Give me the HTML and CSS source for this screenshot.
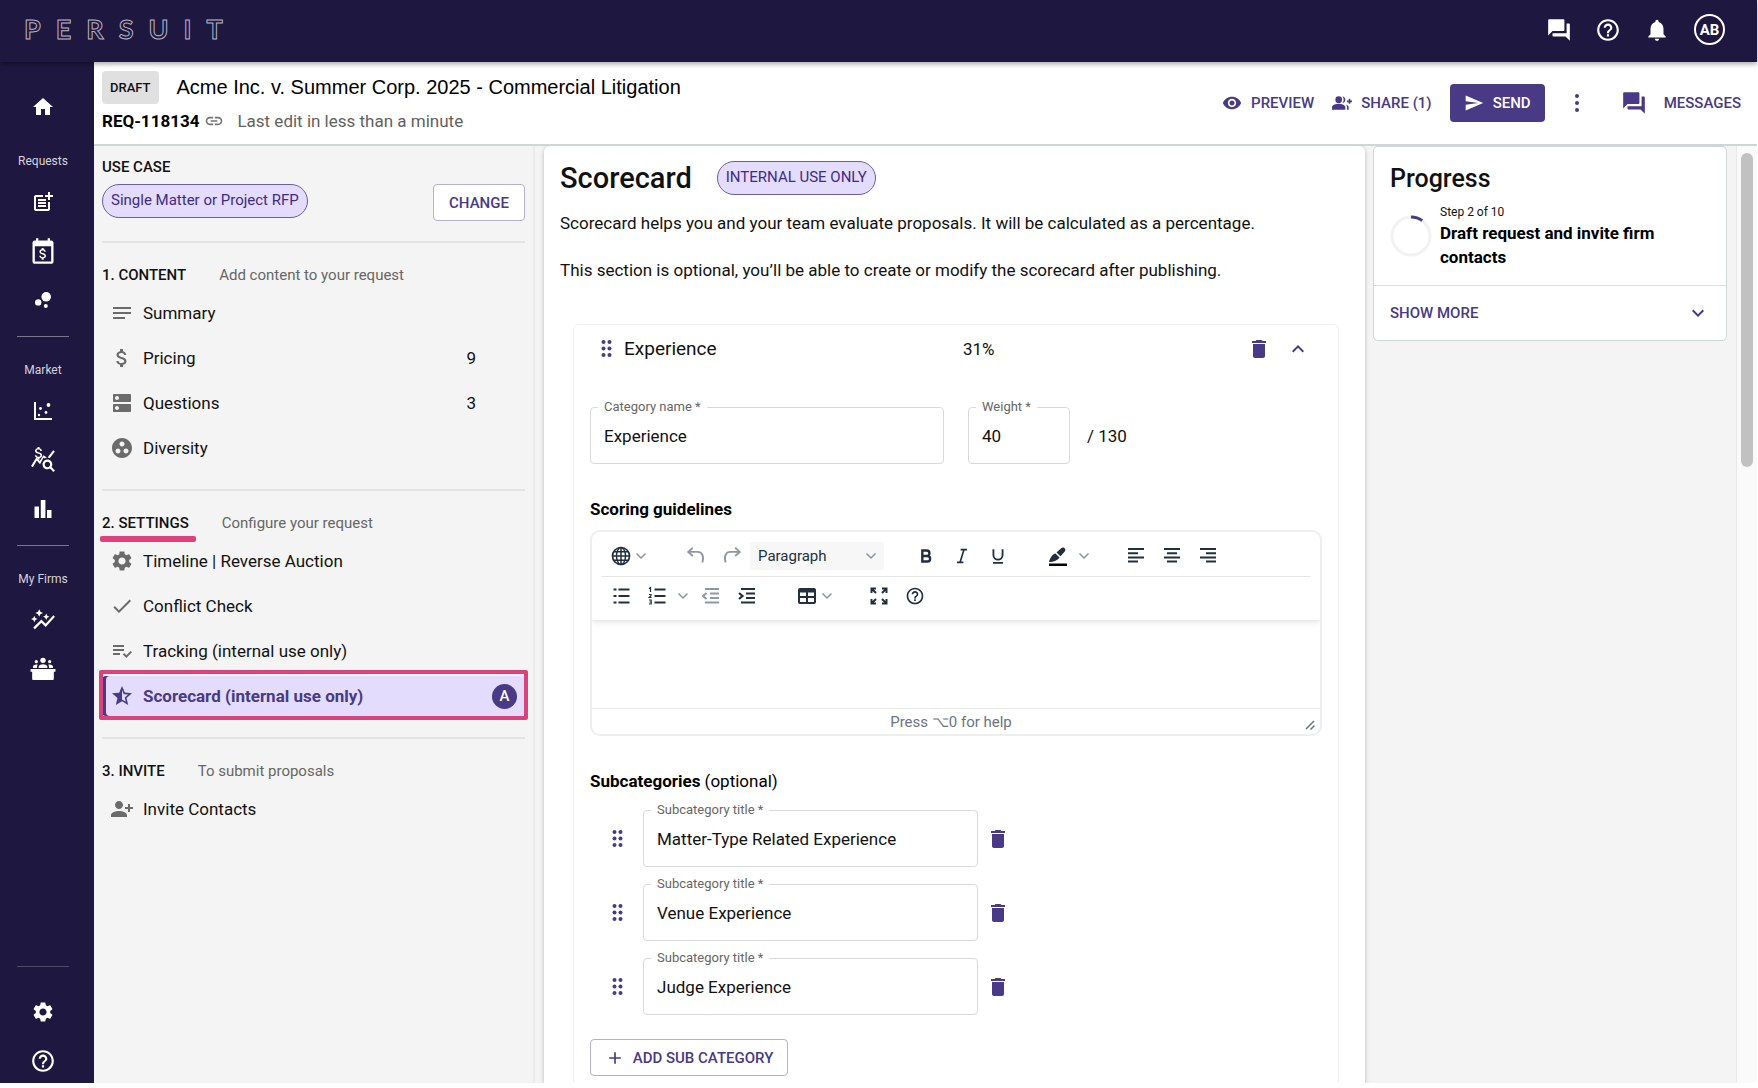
FILE: index.html
```html
<!DOCTYPE html>
<html lang="en">
<head>
<meta charset="utf-8">
<title>Persuit – Scorecard</title>
<link rel="stylesheet" href="styles.css">
</head>
<body>
<svg class="sprite" aria-hidden="true">
  <symbol id="home" viewBox="0 0 24 24"><path d="M10 20v-6h4v6h5v-8h3L12 3 2 12h3v8z"/></symbol>
  <symbol id="post-add" viewBox="0 0 24 24"><path d="M17 19H5V7h7V5H5c-1.1 0-2 .9-2 2v12c0 1.1.9 2 2 2h12c1.1 0 2-.9 2-2v-7h-2zM19 2h-2v3h-3v2h3v3h2V7h3V5h-3zM7 9h8v2H7zM7 12h8v2H7zM7 15h8v2H7z"/></symbol>
  <symbol id="price-calendar" viewBox="0 0 24 24"><path d="M19 3h-1V1h-2v2H8V1H6v2H5c-1.1 0-2 .9-2 2v16c0 1.1.9 2 2 2h14c1.100 0 2-.9 2-2V5c0-1.100-.9-2-2-2zm0 18H5V8h14z"/><path transform="translate(5.300 7.700) scale(.56)" d="M11.800 10.900c-2.270-.59-3-1.200-3-2.150 0-1.090 1.010-1.850 2.700-1.850 1.780 0 2.440.85 2.500 2.100h2.210c-.07-1.720-1.120-3.300-3.210-3.810V3h-3v2.160c-1.940.42-3.500 1.680-3.500 3.610 0 2.310 1.910 3.460 4.700 4.130 2.500.6 3 1.480 3 2.410 0 .69-.49 1.790-2.700 1.790-2.060 0-2.870-.92-2.980-2.100h-2.200c.12 2.190 1.760 3.420 3.680 3.830V21h3v-2.150c1.950-.37 3.500-1.500 3.500-3.550 0-2.840-2.430-3.810-4.700-4.400z"/></symbol>
  <symbol id="bubbles" viewBox="0 0 24 24"><circle cx="7.200" cy="14.400" r="3.200"/><circle cx="14.800" cy="18" r="2"/><circle cx="15.200" cy="8.800" r="4.800"/></symbol>
  <symbol id="scatter" viewBox="0 0 24 24"><path d="M3 3h2v16h16v2H3z"/><circle cx="17.500" cy="6" r="1.900"/><circle cx="9.500" cy="9.500" r="1.400"/><circle cx="15" cy="13.500" r="1.400"/><circle cx="8" cy="16" r="1.200"/></symbol>
  <symbol id="price-stats" viewBox="0 0 24 24"><path d="M19.880 18.470c.44-.7.7-1.510.7-2.390 0-2.490-2.010-4.500-4.500-4.500s-4.500 2.010-4.500 4.500 2.010 4.500 4.490 4.500c.88 0 1.700-.26 2.390-.7L21.580 23 23 21.580zm-3.800.11c-1.380 0-2.500-1.120-2.500-2.500s1.120-2.500 2.500-2.500 2.500 1.120 2.500 2.500-1.120 2.500-2.500 2.500zM15.500 9.800l-2 .8-1-1-3.240 6.280-3.010-3.520-3.630 6.310L1 17.500l5-8 3 3.500 3.400-5.500zM18.310 10.080c-.64-.28-1.330-.45-2.050-.49L21.380 3 23 4.180z"/><path transform="translate(.3 -2.300) scale(.66)" d="M11.800 10.900c-2.270-.59-3-1.200-3-2.150 0-1.090 1.010-1.850 2.700-1.850 1.780 0 2.440.85 2.500 2.100h2.210c-.07-1.720-1.120-3.300-3.210-3.810V3h-3v2.160c-1.940.42-3.500 1.680-3.500 3.610 0 2.310 1.910 3.460 4.700 4.130 2.500.6 3 1.480 3 2.410 0 .69-.49 1.790-2.700 1.790-2.060 0-2.870-.92-2.980-2.100h-2.200c.12 2.190 1.760 3.420 3.680 3.830V21h3v-2.150c1.950-.37 3.500-1.500 3.500-3.550 0-2.840-2.430-3.810-4.700-4.400z"/></symbol>
  <symbol id="bars" viewBox="0 0 24 24"><path d="M3.500 9.500h4.500V21H3.500zM9.800 3h4.600v18H9.800zM16 13h4.500v8H16z"/></symbol>
  <symbol id="trend" viewBox="0 0 24 24"><path d="M14.060 9.940 12 9l2.060-.94L15 6l.94 2.060L18 9l-2.060.94L15 12zM4 14l.94-2.060L7 11l-2.060-.94L4 8l-.94 2.060L1 11l2.060.94zm4.500-5 1.090-2.410L12 5.500 9.590 4.410 8.500 2 7.410 4.410 5 5.500l2.410 1.090zm-4 11.500 6-6.010 4 4L23 8.930l-1.410-1.410-7.090 7.970-4-4L3 19z"/></symbol>
  <symbol id="panel" viewBox="0 0 24 24"><circle cx="12" cy="4" r="2.500"/><circle cx="5.800" cy="5.300" r="1.500"/><circle cx="18.200" cy="5.300" r="1.500"/><path d="M8 11V9.800C8 8.300 10 7.500 12 7.500s4 .8 4 2.300V11zM2.800 11V9.800c0-1.300 1.700-2 3-2 .5 0 .9.100 1.300.2-.4.500-.6 1.100-.6 1.800V11zM17.500 11V9.800c0-.7-.2-1.300-.6-1.800.4-.1.800-.2 1.300-.2 1.300 0 3 .7 3 2V11zM.5 12h23v2.500H22V21c0 .8-.4 1.200-1.200 1.200H3.200C2.400 22.200 2 21.800 2 21v-6.500H.5z"/></symbol>
  <symbol id="gear" viewBox="0 0 24 24"><path d="M19.140 12.940c.04-.3.06-.61.06-.94 0-.32-.02-.64-.07-.94l2.030-1.580c.18-.14.23-.41.12-.61l-1.920-3.320c-.12-.22-.37-.29-.59-.22l-2.390.96c-.5-.38-1.030-.7-1.620-.94l-.36-2.540c-.04-.24-.24-.41-.48-.41h-3.840c-.24 0-.43.17-.47.41l-.36 2.540c-.59.24-1.130.57-1.620.94l-2.390-.96c-.22-.08-.47 0-.59.22L2.740 8.870c-.12.21-.08.47.12.61l2.030 1.580c-.05.3-.09.63-.09.94s.02.64.07.94l-2.030 1.580c-.18.14-.23.41-.12.61l1.920 3.320c.12.22.37.29.59.22l2.390-.96c.5.38 1.030.7 1.620.94l.36 2.540c.05.24.24.41.48.41h3.840c.24 0 .44-.17.47-.41l.36-2.540c.59-.24 1.130-.56 1.620-.94l2.390.96c.22.08.47 0 .59-.22l1.920-3.320c.12-.22.07-.47-.12-.61zM12 15.600c-1.980 0-3.600-1.620-3.600-3.600s1.620-3.600 3.600-3.600 3.600 1.620 3.600 3.600-1.620 3.600-3.600 3.600z"/></symbol>
  <symbol id="help" viewBox="0 0 24 24"><path d="M11 18h2v-2h-2zm1-16C6.480 2 2 6.480 2 12s4.480 10 10 10 10-4.480 10-10S17.520 2 12 2zm0 18c-4.410 0-8-3.590-8-8s3.590-8 8-8 8 3.590 8 8-3.590 8-8 8zm0-14c-2.210 0-4 1.790-4 4h2c0-1.100.9-2 2-2s2 .9 2 2c0 2-3 1.750-3 5h2c0-2.250 3-2.500 3-5 0-2.210-1.790-4-4-4z"/></symbol>
  <symbol id="bell" viewBox="0 0 24 24"><path d="M12 22c1.100 0 2-.9 2-2h-4c0 1.100.89 2 2 2zm6-6v-5c0-3.070-1.640-5.640-4.500-6.320V4c0-.83-.67-1.500-1.500-1.500s-1.500.67-1.500 1.500v.68C7.630 5.360 6 7.920 6 11v5l-2 2v1h16v-1z"/></symbol>
  <symbol id="forum" viewBox="0 0 24 24"><path d="M21 6h-2v9H6v2c0 .55.45 1 1 1h11l4 4V7c0-.55-.45-1-1-1zm-4 6V3c0-.55-.45-1-1-1H3c-.55 0-1 .45-1 1v14l4-4h10c.55 0 1-.45 1-1z"/></symbol>
  <symbol id="eye" viewBox="0 0 24 24"><path d="M12 4.500C7 4.500 2.730 7.610 1 12c1.730 4.390 6 7.500 11 7.500s9.270-3.110 11-7.500c-1.730-4.390-6-7.500-11-7.500zM12 17c-2.760 0-5-2.240-5-5s2.240-5 5-5 5 2.240 5 5-2.240 5-5 5zm0-8c-1.660 0-3 1.340-3 3s1.340 3 3 3 3-1.340 3-3-1.340-3-3-3z"/></symbol>
  <symbol id="group-add" viewBox="0 0 24 24"><path d="M22 9V7h-2v2h-2v2h2v2h2v-2h2V9z"/><circle cx="8" cy="8" r="4"/><path d="M8 13c-2.670 0-8 1.340-8 4v3h16v-3c0-2.660-5.330-4-8-4zM12.510 4.050C13.430 5.110 14 6.490 14 8s-.57 2.890-1.490 3.950C14.470 11.700 16 10.040 16 8s-1.530-3.700-3.490-3.950zM16.530 13.830C17.420 14.660 18 15.700 18 17v3h2v-3c0-1.450-1.590-2.510-3.470-3.170z"/></symbol>
  <symbol id="send" viewBox="0 0 24 24"><path d="M2.010 21 23 12 2.010 3 2 10l15 2-15 2z"/></symbol>
  <symbol id="dots" viewBox="0 0 24 24"><circle cx="12" cy="5" r="2"/><circle cx="12" cy="12" r="2"/><circle cx="12" cy="19" r="2"/></symbol>
  <symbol id="link" viewBox="0 0 24 24"><path d="M3.900 12c0-1.710 1.390-3.100 3.100-3.100h4V7H7c-2.760 0-5 2.240-5 5s2.240 5 5 5h4v-1.900H7c-1.710 0-3.100-1.390-3.100-3.100zM8 13h8v-2H8zm9-6h-4v1.900h4c1.710 0 3.100 1.390 3.100 3.100s-1.390 3.100-3.100 3.100h-4V17h4c2.760 0 5-2.240 5-5s-2.240-5-5-5z"/></symbol>
  <symbol id="notes" viewBox="0 0 24 24"><path d="M3 18h12v-2H3zM3 6v2h18V6zm0 7h18v-2H3z"/></symbol>
  <symbol id="money" viewBox="0 0 24 24"><path d="M11.800 10.900c-2.270-.59-3-1.200-3-2.150 0-1.090 1.010-1.850 2.700-1.850 1.780 0 2.440.85 2.500 2.100h2.210c-.07-1.720-1.120-3.300-3.210-3.810V3h-3v2.160c-1.940.42-3.500 1.680-3.500 3.610 0 2.310 1.910 3.460 4.700 4.130 2.500.6 3 1.480 3 2.410 0 .69-.49 1.790-2.700 1.790-2.060 0-2.870-.92-2.980-2.100h-2.200c.12 2.190 1.760 3.420 3.680 3.830V21h3v-2.150c1.950-.37 3.500-1.500 3.500-3.550 0-2.840-2.430-3.810-4.700-4.400z"/></symbol>
  <symbol id="dns" viewBox="0 0 24 24"><path d="M20 13H4c-.55 0-1 .45-1 1v6c0 .55.45 1 1 1h16c.55 0 1-.45 1-1v-6c0-.55-.45-1-1-1zM7 19c-1.100 0-2-.9-2-2s.9-2 2-2 2 .9 2 2-.9 2-2 2zM20 3H4c-.55 0-1 .45-1 1v6c0 .55.45 1 1 1h16c.55 0 1-.45 1-1V4c0-.55-.45-1-1-1zM7 9c-1.100 0-2-.9-2-2s.9-2 2-2 2 .9 2 2-.9 2-2 2z"/></symbol>
  <symbol id="group-work" viewBox="0 0 24 24"><path d="M12 2C6.480 2 2 6.480 2 12s4.480 10 10 10 10-4.480 10-10S17.520 2 12 2zM8 17.500c-1.380 0-2.500-1.120-2.500-2.500s1.120-2.500 2.500-2.500 2.500 1.120 2.500 2.500-1.120 2.500-2.500 2.500zM9.500 8c0-1.380 1.120-2.500 2.500-2.500s2.500 1.120 2.500 2.500-1.120 2.500-2.500 2.500S9.500 9.380 9.500 8zm6.500 9.500c-1.380 0-2.500-1.120-2.500-2.500s1.120-2.500 2.500-2.500 2.500 1.120 2.500 2.500-1.120 2.500-2.500 2.500z"/></symbol>
  <symbol id="check" viewBox="0 0 24 24"><path d="M9 16.170 4.830 12l-1.420 1.410L9 19 21 7l-1.410-1.410z"/></symbol>
  <symbol id="list-check" viewBox="0 0 24 24"><path d="M3 10h11v2H3zM3 6h11v2H3zM3 14h7v2H3zM20.590 11.930l-4.250 4.240-2.120-2.120-1.410 1.410L16.340 19 22 13.340z"/></symbol>
  <symbol id="star-half" viewBox="0 0 24 24"><path d="m22 9.240-7.190-.62L12 2 9.190 8.630 2 9.240l5.460 4.730L5.820 21 12 17.270 18.180 21l-1.630-7.030zM12 15.400V6.100l1.710 4.040 4.380.38-3.320 2.880 1 4.280z"/></symbol>
  <symbol id="person-add" viewBox="0 0 24 24"><path d="M13 8c0-2.210-1.790-4-4-4S5 5.790 5 8s1.790 4 4 4 4-1.790 4-4zm2 2v2h3v3h2v-3h3v-2h-3V7h-2v3zM1 18v2h16v-2c0-2.660-5.330-4-8-4s-8 1.340-8 4z"/></symbol>
  <symbol id="trash" viewBox="0 0 24 24"><path d="M6 19c0 1.100.9 2 2 2h8c1.100 0 2-.9 2-2V7H6zM19 4h-3.500l-1-1h-5l-1 1H5v2h14z"/></symbol>
  <symbol id="down" viewBox="0 0 24 24"><path d="M16.590 8.590 12 13.170 7.410 8.590 6 10l6 6 6-6z"/></symbol>
  <symbol id="up" viewBox="0 0 24 24"><path d="m12 8-6 6 1.410 1.410L12 10.830l4.590 4.580L18 14z"/></symbol>
  <symbol id="plus" viewBox="0 0 24 24"><path d="M19 13h-6v6h-2v-6H5v-2h6V5h2v6h6z"/></symbol>
  <symbol id="drag" viewBox="0 0 12 20"><circle cx="2.500" cy="3" r="2"/><circle cx="8.500" cy="3" r="2"/><circle cx="2.500" cy="9.500" r="2"/><circle cx="8.500" cy="9.500" r="2"/><circle cx="2.500" cy="16" r="2"/><circle cx="8.500" cy="16" r="2"/></symbol>
  <symbol id="caret" viewBox="0 0 12 12"><path d="m1.500 3.500 4.500 4.500 4.500-4.500" fill="none" stroke="currentColor" stroke-width="1.500"/></symbol>
  <symbol id="globe" viewBox="0 0 24 24"><circle cx="12" cy="12" r="8.500" fill="none" stroke="currentColor" stroke-width="1.700"/><ellipse cx="12" cy="12" rx="4.500" ry="8.500" fill="none" stroke="currentColor" stroke-width="1.500"/><path d="M12 3.500v17M3.500 12h17M4.500 7.800h15M4.500 16.200h15" fill="none" stroke="currentColor" stroke-width="1.500"/></symbol>
  <symbol id="undo" viewBox="0 0 24 24"><path d="M8.500 3 3.500 7.500l5 4.500M3.500 7.500H14c4.500 0 7 4.500 5 11.500" fill="none" stroke="currentColor" stroke-width="2"/></symbol>
  <symbol id="redo" viewBox="0 0 24 24"><path d="m15.500 3 5 4.500-5 4.500M20.500 7.500H10c-4.500 0-7 4.500-5 11.500" fill="none" stroke="currentColor" stroke-width="2"/></symbol>
  <symbol id="bold" viewBox="0 0 24 24"><path d="M8 6h4.800a3 3 0 0 1 0 6H8zM8 12h5.500a3 3 0 0 1 0 6H8z" fill="none" stroke="currentColor" stroke-width="2.600"/></symbol>
  <symbol id="italic" viewBox="0 0 24 24"><path d="M10.500 5h7M6.500 19h7M14.200 5l-4.400 14" fill="none" stroke="currentColor" stroke-width="1.800"/></symbol>
  <symbol id="underline" viewBox="0 0 24 24"><path d="M7 4.500v6.500a5 5 0 0 0 10 0V4.500M6.500 19.500h11" fill="none" stroke="currentColor" stroke-width="2"/></symbol>
  <symbol id="pen" viewBox="0 0 24 24"><path d="M3 18c1-4 3.500-8 6.500-8.500l4 4C12 16 8 18 3 18zM10.500 8.500l5-4.500c2-1.700 5 1 3.500 3.200l-4.500 5z"/><path d="M3 19.500h18V22H3z" fill="#000"/></symbol>
  <symbol id="left" viewBox="0 0 24 24"><path d="M4 5h16M4 9.200h10M4 13.400h16M4 17.600h10" fill="none" stroke="currentColor" stroke-width="2"/></symbol>
  <symbol id="center" viewBox="0 0 24 24"><path d="M4 5h16M7 9.200h10M4 13.400h16M7 17.600h10" fill="none" stroke="currentColor" stroke-width="2"/></symbol>
  <symbol id="right" viewBox="0 0 24 24"><path d="M4 5h16M10 9.200h10M4 13.400h16M10 17.600h10" fill="none" stroke="currentColor" stroke-width="2"/></symbol>
  <symbol id="bullets" viewBox="0 0 24 24"><path d="M9.500 5.500h11M9.500 12h11M9.500 18.500h11M4.500 5.500h3M4.500 12h3M4.500 18.500h3" fill="none" stroke="currentColor" stroke-width="2.200"/></symbol>
  <symbol id="numbers" viewBox="0 0 24 24"><path d="M9.500 5.500h11M9.500 12h11M9.500 18.500h11" fill="none" stroke="currentColor" stroke-width="2.200"/><path d="M4 4.500 5.500 3.500v4.500M4 10.500h2v1.200L4.200 13.500H6.500M4 16h2.200v4H4M4.500 18H6" fill="none" stroke="currentColor" stroke-width="1.200"/></symbol>
  <symbol id="outdent" viewBox="0 0 24 24"><path d="M6 5h14M11 9.500h9M11 14h9M6 18.500h14M7.500 9 4 12l3.500 3" fill="none" stroke="currentColor" stroke-width="2"/></symbol>
  <symbol id="indent" viewBox="0 0 24 24"><path d="M6 5h14M11 9.500h9M11 14h9M6 18.500h14M4 9l3.500 3L4 15" fill="none" stroke="currentColor" stroke-width="2.200"/></symbol>
  <symbol id="table" viewBox="0 0 24 24"><path fill-rule="evenodd" d="M5 4h14c1.100 0 2 .9 2 2v12c0 1.100-.9 2-2 2H5c-1.100 0-2-.9-2-2V6c0-1.100.9-2 2-2zm0 4.500v3.500h6V8.500zm8 0v3.500h6V8.500zM5 14v4h6v-4zm8 0v4h6v-4z"/></symbol>
  <symbol id="fullscreen" viewBox="0 0 24 24"><path d="M4.500 9V4.500H9M4.500 4.500 9 9M15 4.500h4.500V9M19.500 4.500 15 9M4.500 15v4.500H9M4.500 19.500 9 15M15 19.500h4.500V15M19.500 19.500 15 15" fill="none" stroke="currentColor" stroke-width="2"/></symbol>
  <symbol id="resize" viewBox="0 0 10 10"><path d="M1 9 9 1M5.500 9.500l4-4" fill="none" stroke="currentColor" stroke-width="1.500"/></symbol>
</svg>

<header class="topbar">
  <a class="logo" href="#" aria-label="Persuit"><span>P</span><span>E</span><span>R</span><span>S</span><span>U</span><span>I</span><span>T</span></a>
  <div class="topbar-tools">
    <button class="bar-btn" aria-label="Chat"><svg class="i26"><use href="#forum"/></svg></button>
    <button class="bar-btn" aria-label="Help"><svg class="i26"><use href="#help"/></svg></button>
    <button class="bar-btn" aria-label="Notifications"><svg class="i26"><use href="#bell"/></svg></button>
    <button class="avatar">AB</button>
  </div>
</header>

<div class="shell">
  <nav class="rail" aria-label="Main">
    <a href="#" class="rail-home" aria-label="Home"><svg class="i24"><use href="#home"/></svg></a>
    <div class="rail-group">
      <span class="rail-label">Requests</span>
      <a href="#" aria-label="New request"><svg class="i24"><use href="#post-add"/></svg></a>
      <a href="#" aria-label="Rates"><svg class="i28"><use href="#price-calendar"/></svg></a>
      <a href="#" aria-label="Bubbles"><svg class="i24"><use href="#bubbles"/></svg></a>
    </div>
    <div class="rail-group">
      <span class="rail-label">Market</span>
      <a href="#" aria-label="Scatter"><svg class="i24"><use href="#scatter"/></svg></a>
      <a href="#" aria-label="Price insights"><svg class="i26"><use href="#price-stats"/></svg></a>
      <a href="#" aria-label="Charts"><svg class="i24"><use href="#bars"/></svg></a>
    </div>
    <div class="rail-group">
      <span class="rail-label">My Firms</span>
      <a href="#" aria-label="Trends"><svg class="i26"><use href="#trend"/></svg></a>
      <a href="#" aria-label="Panel"><svg class="i26"><use href="#panel"/></svg></a>
    </div>
    <div class="rail-foot">
      <a href="#" aria-label="Settings"><svg class="i24"><use href="#gear"/></svg></a>
      <a href="#" aria-label="Support"><svg class="i26"><use href="#help"/></svg></a>
    </div>
  </nav>

  <div class="page">
    <div class="request-bar">
      <div class="request-info">
        <div class="request-title"><span class="badge">DRAFT</span><h1>Acme Inc. v. Summer Corp. 2025 - Commercial Litigation</h1></div>
        <div class="request-meta"><strong>REQ-118134</strong><svg class="i20"><use href="#link"/></svg><span>Last edit in less than a minute</span></div>
      </div>
      <div class="request-actions">
        <button class="text-btn"><svg class="i20"><use href="#eye"/></svg>PREVIEW</button>
        <button class="text-btn"><svg class="i20"><use href="#group-add"/></svg>SHARE (1)</button>
        <button class="send-btn"><svg class="i20"><use href="#send"/></svg>SEND</button>
        <button class="text-btn more-btn" aria-label="More"><svg class="i24"><use href="#dots"/></svg></button>
        <button class="text-btn messages-btn"><svg class="i26"><use href="#forum"/></svg>MESSAGES</button>
      </div>
    </div>

    <div class="workspace">
      <aside class="steps">
        <h2 class="steps-title">USE CASE</h2>
        <div class="use-case"><span class="chip">Single Matter or Project RFP</span><button class="outline-btn change-btn">CHANGE</button></div>
        <section class="step">
          <div class="step-head"><h2>1. CONTENT</h2><span>Add content to your request</span></div>
          <ul>
            <li><a href="#"><svg class="i24"><use href="#notes"/></svg>Summary</a></li>
            <li><a href="#"><svg class="i24"><use href="#money"/></svg>Pricing<b class="count">9</b></a></li>
            <li><a href="#"><svg class="i24"><use href="#dns"/></svg>Questions<b class="count">3</b></a></li>
            <li><a href="#"><svg class="i24"><use href="#group-work"/></svg>Diversity</a></li>
          </ul>
        </section>
        <section class="step">
          <div class="step-head"><h2 class="marked">2. SETTINGS</h2><span>Configure your request</span></div>
          <ul>
            <li><a href="#"><svg class="i24"><use href="#gear"/></svg>Timeline | Reverse Auction</a></li>
            <li><a href="#"><svg class="i24"><use href="#check"/></svg>Conflict Check</a></li>
            <li><a href="#"><svg class="i24"><use href="#list-check"/></svg>Tracking (internal use only)</a></li>
            <li><a href="#" class="active" aria-current="page"><svg class="i24"><use href="#star-half"/></svg>Scorecard (internal use only)<span class="person">A</span></a></li>
          </ul>
        </section>
        <section class="step">
          <div class="step-head"><h2>3. INVITE</h2><span>To submit proposals</span></div>
          <ul>
            <li><a href="#"><svg class="i24"><use href="#person-add"/></svg>Invite Contacts</a></li>
          </ul>
        </section>
      </aside>

      <main class="sheet">
        <div class="sheet-head"><h2>Scorecard</h2><span class="chip">INTERNAL USE ONLY</span></div>
        <p>Scorecard helps you and your team evaluate proposals. It will be calculated as a percentage.</p>
        <p>This section is optional, you’ll be able to create or modify the scorecard after publishing.</p>

        <section class="category">
          <div class="category-head">
            <svg class="drag"><use href="#drag"/></svg>
            <h3>Experience</h3>
            <span class="share">31%</span>
            <button class="icon-btn" aria-label="Delete category"><svg class="i24"><use href="#trash"/></svg></button>
            <button class="icon-btn" aria-label="Collapse"><svg class="i24"><use href="#up"/></svg></button>
          </div>
          <div class="category-fields">
            <div class="field name-field"><label for="cat">Category name *</label><input id="cat" type="text" value="Experience"></div>
            <div class="field weight-field"><label for="weight">Weight *</label><input id="weight" type="text" value="40"></div>
            <span>/ 130</span>
          </div>
          <h4>Scoring guidelines</h4>
          <div class="editor">
            <div class="toolbar">
              <div class="tool-row">
                <button class="tool" aria-label="Language"><svg class="i24"><use href="#globe"/></svg></button><button class="tool caret" aria-label="Language options"><svg><use href="#caret"/></svg></button>
                <button class="tool dim gap-lg" aria-label="Undo"><svg class="i22"><use href="#undo"/></svg></button>
                <button class="tool dim" aria-label="Redo"><svg class="i22"><use href="#redo"/></svg></button>
                <button class="tool-select">Paragraph<svg><use href="#caret"/></svg></button>
                <button class="tool gap-md" aria-label="Bold"><svg class="i22"><use href="#bold"/></svg></button>
                <button class="tool" aria-label="Italic"><svg class="i22"><use href="#italic"/></svg></button>
                <button class="tool" aria-label="Underline"><svg class="i22"><use href="#underline"/></svg></button>
                <button class="tool gap-md" aria-label="Text color"><svg class="i24"><use href="#pen"/></svg></button><button class="tool caret split" aria-label="Color options"><svg><use href="#caret"/></svg></button>
                <button class="tool gap-md" aria-label="Align left"><svg class="i24"><use href="#left"/></svg></button>
                <button class="tool" aria-label="Align center"><svg class="i24"><use href="#center"/></svg></button>
                <button class="tool" aria-label="Align right"><svg class="i24"><use href="#right"/></svg></button>
              </div>
              <div class="tool-row">
                <button class="tool" aria-label="Bullet list"><svg class="i24"><use href="#bullets"/></svg></button>
                <button class="tool" aria-label="Numbered list"><svg class="i24"><use href="#numbers"/></svg></button><button class="tool caret split" aria-label="List options"><svg><use href="#caret"/></svg></button>
                <button class="tool dim" aria-label="Outdent"><svg class="i24"><use href="#outdent"/></svg></button>
                <button class="tool" aria-label="Indent"><svg class="i24"><use href="#indent"/></svg></button>
                <button class="tool gap-md" aria-label="Table"><svg class="i24"><use href="#table"/></svg></button><button class="tool caret" aria-label="Table options"><svg><use href="#caret"/></svg></button>
                <button class="tool gap-md" aria-label="Fullscreen"><svg class="i24"><use href="#fullscreen"/></svg></button>
                <button class="tool" aria-label="Help"><svg class="i20"><use href="#help"/></svg></button>
              </div>
            </div>
            <textarea aria-label="Scoring guidelines"></textarea>
            <div class="status"><span>Press ⌥0 for help</span><svg><use href="#resize"/></svg></div>
          </div>
          <h4>Subcategories <span>(optional)</span></h4>
          <div class="subs">
            <div class="sub"><svg class="drag"><use href="#drag"/></svg><div class="field"><label for="s1">Subcategory title *</label><input id="s1" type="text" value="Matter-Type Related Experience"></div><button class="icon-btn" aria-label="Delete"><svg class="i24"><use href="#trash"/></svg></button></div>
            <div class="sub"><svg class="drag"><use href="#drag"/></svg><div class="field"><label for="s2">Subcategory title *</label><input id="s2" type="text" value="Venue Experience"></div><button class="icon-btn" aria-label="Delete"><svg class="i24"><use href="#trash"/></svg></button></div>
            <div class="sub"><svg class="drag"><use href="#drag"/></svg><div class="field"><label for="s3">Subcategory title *</label><input id="s3" type="text" value="Judge Experience"></div><button class="icon-btn" aria-label="Delete"><svg class="i24"><use href="#trash"/></svg></button></div>
          </div>
          <button class="outline-btn add-btn"><svg class="i20"><use href="#plus"/></svg>ADD SUB CATEGORY</button>
        </section>
      </main>

      <aside class="progress">
        <div class="progress-card">
          <div class="progress-body">
            <h2>Progress</h2>
            <div class="progress-step">
              <svg class="ring" viewBox="0 0 42 42"><circle cx="21" cy="21" r="19" fill="none" stroke="#f2f2f2" stroke-width="3"/><path d="M21 2a19 19 0 0 1 11.200 3.600" fill="none" stroke="#483a85" stroke-width="3"/></svg>
              <div><small>Step 2 of 10</small><strong>Draft request and invite firm contacts</strong></div>
            </div>
          </div>
          <button class="show-more">SHOW MORE<svg class="i24"><use href="#down"/></svg></button>
        </div>
      </aside>
      <div class="scroll-track"><div class="scroll-thumb"></div></div>
    </div>
  </div>
</div>
</body>
</html>
```
FILE: styles.css
```css
* { box-sizing: border-box; }
body {
  margin: 0;
  padding: 0 1px 5px 0;
  height: 100vh;
  display: flex;
  flex-direction: column;
  overflow: hidden;
  background: #fff;
  color: #111;
  font: 400 17px/24px Roboto, sans-serif;
}
h1, h2, h3, h4, p, ul { margin: 0; padding: 0; font-weight: 500; }
p, ul { font-weight: 400; }
ul { list-style: none; }
a { color: inherit; text-decoration: none; }
button { font: inherit; color: inherit; background: none; border: 0; padding: 0; margin: 0; display: flex; align-items: center; justify-content: center; flex: none; cursor: pointer; }
svg { fill: currentColor; display: block; flex: none; }
.sprite { position: absolute; width: 0; height: 0; }
.i20 { width: 20px; height: 20px; }
.i22 { width: 22px; height: 22px; }
.i24 { width: 24px; height: 24px; }
.i26 { width: 26px; height: 26px; }
.i28 { width: 28px; height: 28px; }

/* top bar */
.topbar {
  flex: none;
  height: 62px;
  padding: 0 32px 3px 24px;
  display: flex;
  align-items: center;
  justify-content: space-between;
  background: #1e173f;
  color: #fff;
  position: relative;
  z-index: 2;
  box-shadow: 0 2px 5px rgba(0, 0, 0, .35);
}
.logo {
  display: flex;
  gap: 15px;
  padding-bottom: 2px;
  font-family: Lato, sans-serif;
  font-size: 27px;
  line-height: 32px;
  font-weight: 700;
  color: #1e173f;
  -webkit-text-stroke: 1px #b8b4c6;
}
.topbar-tools { display: flex; align-items: center; gap: 23px; }
.avatar { width: 31px; height: 31px; margin-left: 1px; border: 2px solid #fff; border-radius: 50%; font-size: 15px; font-weight: 700; }

/* left rail */
.shell { flex: 1; min-height: 0; display: flex; }
.rail {
  flex: none;
  width: 94px;
  padding: 32px 8px 9px 0;
  display: flex;
  flex-direction: column;
  align-items: center;
  background: #1e173f;
  color: #fff;
}
.rail a { height: 26px; display: flex; align-items: center; }
.rail-home { margin-bottom: 31px; }
.rail-group { width: 52px; display: flex; flex-direction: column; align-items: center; gap: 23px; }
.rail-group + .rail-group { margin-top: 23px; padding-top: 23px; border-top: 1px solid #79758c; }
.rail-label { font-size: 12px; line-height: 20px; color: #d5d3dc; white-space: nowrap; margin-bottom: -5px; }
.rail-foot { width: 52px; margin-top: auto; padding-top: 32px; border-top: 1px solid #4f4a6a; display: flex; flex-direction: column; align-items: center; gap: 23px; }

/* request bar */
.page { flex: 1; min-width: 0; display: flex; flex-direction: column; background: #f4f4f4; }
.request-bar {
  flex: none;
  height: 84px;
  padding: 8px 16px 0 8px;
  display: flex;
  justify-content: space-between;
  background: #fff;
  border-bottom: 2px solid #d0d6d6;
}
.request-title { display: flex; align-items: center; gap: 18px; height: 34px; }
.request-title h1 { font: 400 20px/28px "Liberation Sans", Arial, sans-serif; color: #000; }
.badge { padding: 0 8px; font-size: 13px; line-height: 33px; font-weight: 500; background: #e0e0e0; border-radius: 4px; }
.request-meta { display: flex; align-items: center; height: 33px; color: #616161; }
.request-meta strong { color: #000; font-weight: 700; }
.request-meta svg { margin: 0 13px 0 5px; color: #757575; }
.request-actions { display: flex; align-items: center; height: 66px; color: #483a85; font-size: 15px; font-weight: 500; }
.text-btn { gap: 9px; margin-right: 18px; }
.send-btn { width: 95px; height: 38px; gap: 9px; background: #483a85; color: #fff; border-radius: 4px; }
.more-btn { margin: 0 32px 0 20px; }
.messages-btn { gap: 17px; margin-right: 0; }

/* steps column */
.workspace { flex: 1; min-height: 0; display: flex; overflow: hidden; }
.steps { flex: none; width: 441px; padding: 9px 8px 0 8px; border-right: 2px solid #ebebeb; }
.steps h2 { font-size: 15px; line-height: 24px; }
.chip { height: 34px; padding: 0 8px; font-size: 15px; line-height: 30px; color: #3d2b87; background: #e4dcfc; border: 1px solid #6a5da0; border-radius: 17px; white-space: nowrap; }
.use-case { display: flex; justify-content: space-between; align-items: flex-start; height: 36px; margin-top: 5px; }
.outline-btn { height: 37px; border: 1px solid #b5afd3; border-radius: 4px; background: #fff; color: #483a85; font-size: 15px; font-weight: 500; }
.change-btn { width: 92px; }
.step { margin-top: 21px; padding-top: 20px; border-top: 2px solid #e4e4e4; }
.step-head { display: flex; gap: 33px; font-size: 15px; color: #666; margin-bottom: 6px; }
.step-head h2 { color: #111; }
.step ul { display: grid; gap: 5px; }
.step li a { position: relative; height: 40px; padding: 0 8px; display: flex; align-items: center; gap: 9px; }
.step li svg { color: #6b6b6b; }
.count { margin-left: auto; margin-right: 41px; font-weight: 400; }
.marked { position: relative; }
.marked::after { content: ""; position: absolute; left: -2px; right: -7px; bottom: -7px; height: 6px; border-radius: 2px; background: #dc437d; }
.step li .active { background: #e4dcfc; color: #483a85; font-weight: 700; border-radius: 4px; box-shadow: inset 4px 0 #483a85; }
.step li .active svg { color: #483a85; }
.active::after { content: ""; position: absolute; inset: -6px -3px -4px -3px; border: 4px solid #dc437d; border-radius: 2px; }
.person { margin-left: auto; width: 25px; height: 25px; border-radius: 50%; background: #483a85; color: #fff; font-size: 15px; line-height: 25px; font-weight: 500; text-align: center; }

/* scorecard sheet */
.sheet { flex: 1; min-width: 0; margin: 0 8px 0 9px; padding: 15px 26px 0 16px; display: flex; flex-direction: column; background: #fff; border-radius: 6px 6px 0 0; box-shadow: 0 1px 4px rgba(0, 0, 0, .25); }
.sheet-head { display: flex; align-items: center; gap: 25px; margin-bottom: 16px; }
.sheet-head h2 { font-size: 29px; line-height: 34px; }
.sheet p { margin-bottom: 23px; }
.category { flex: 1 0 auto; margin: 19px 0 0 13px; padding: 0 16px; border: 1px solid #f0f0f0; border-bottom: 0; border-radius: 6px 6px 0 0; }
.category-head { display: grid; grid-template-columns: 12px 1fr 271px 28px 28px; align-items: center; height: 48px; padding: 0 10px 0 11px; column-gap: 11px; color: #111; }
.category-head h3 { font-size: 19px; font-weight: 400; }
.drag { width: 12px; height: 20px; color: #483a85; }
.icon-btn { color: #483a85; }
.category-fields { display: flex; align-items: center; margin-top: 34px; }
.category-fields > span { margin-left: 17px; }
.field { position: relative; }
.field label { position: absolute; left: 8px; top: -9px; padding: 0 6px; font-size: 13px; line-height: 18px; color: #666; background: #fff; }
.field input { display: block; width: 100%; height: 57px; padding: 0 13px; border: 1px solid #d9d9d9; border-radius: 4px; font: inherit; color: #111; background: #fff; }
.name-field { width: 354px; }
.weight-field { width: 102px; margin-left: 24px; }
.category h4 { font-weight: 700; margin: 33px 0 9px; color: #000; }
.category h4 span { font-weight: 400; }

/* rich text editor */
.editor { border: 2px solid #eee; border-radius: 10px; overflow: hidden; color: #222f3e; }
.toolbar { padding: 0 10px; position: relative; box-shadow: 0 2px 6px rgba(0, 0, 0, .12); }
.tool-row { display: flex; align-items: center; height: 44px; padding: 4px 0 0 1px; }
.tool-row + .tool-row { border-top: 1px solid #e5e5e5; padding: 0 0 6px 1px; }
.tool { width: 36px; height: 28px; }
.tool svg { color: inherit; }
.caret { width: 20px; margin-left: -8px; color: #8c939c; }
.split { margin-left: -2px; }
.caret svg, .tool-select svg { width: 12px; height: 12px; color: #8c939c; }
.dim { color: #9197a0; }
.gap-lg { margin-left: 27px; }
.gap-md { margin-left: 24px; }
.tool-select { width: 134px; height: 28px; padding: 0 7px 0 8px; justify-content: space-between; border-radius: 3px; background: #f7f7f7; font-size: 15px; }
.editor textarea { display: block; width: 100%; height: 88px; border: 0; resize: none; font: inherit; }
.status { display: flex; align-items: center; height: 26px; padding: 0 5px; border-top: 1px solid #e8e8e8; font-size: 15px; color: #6b7480; }
.status span { flex: 1; text-align: center; }
.status svg { width: 10px; height: 10px; align-self: flex-end; margin-bottom: 4px; }

/* subcategories */
.subs { display: grid; gap: 17px; padding-left: 22px; margin-top: 17px; }
.sub { display: flex; align-items: center; }
.sub .field { width: 335px; margin: 0 8px 0 19px; }
.add-btn { width: 198px; margin-top: 24px; gap: 8px; }

/* progress */
.progress { flex: none; width: 354px; }
.progress-card { background: #fff; border: 1px solid #cfd6d6; border-radius: 5px; }
.progress-body { padding: 18px 16px 16px; }
.progress-body h2 { font-size: 25px; line-height: 28px; }
.progress-step { display: flex; align-items: center; gap: 8px; margin-top: 10px; }
.progress-step small { display: block; font-size: 12px; line-height: 18px; }
.progress-step strong { display: block; color: #000; }
.ring { width: 42px; height: 42px; }
.show-more { width: 100%; height: 55px; padding: 0 16px; justify-content: space-between; border-top: 1px solid #dedede; color: #483a85; font-size: 15px; font-weight: 500; }
.scroll-track { flex: none; width: 21px; margin-left: 9px; padding: 7px 4px 0 4px; background: #fafafa; border-left: 1px solid #e8e8e8; }
.scroll-thumb { height: 314px; border-radius: 6px; background: #c1c1c1; }
```
